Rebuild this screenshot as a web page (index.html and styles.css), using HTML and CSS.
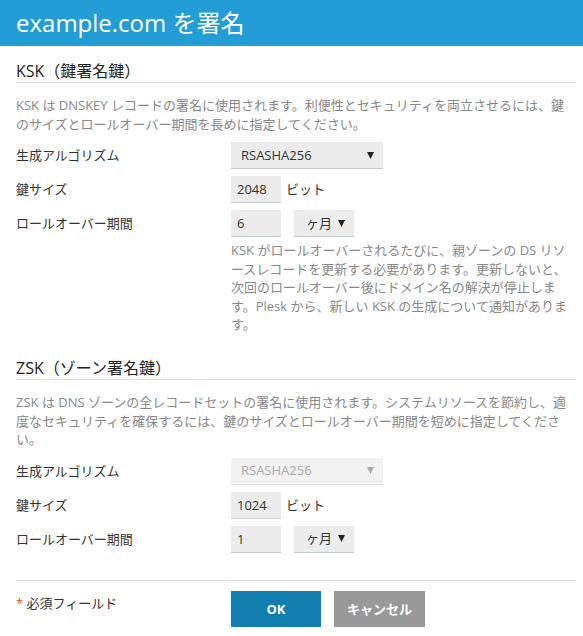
FILE: index.html
```html
<!DOCTYPE html>
<html lang="ja">
<head>
<meta charset="utf-8">
<title>example.com を署名</title>
<link rel="stylesheet" href="styles.css">
</head>
<body>
<header class="title-bar">example.com を署名</header>
<main class="content">
  <section class="group">
    <h2 class="group-title">KSK（鍵署名鍵）</h2>
    <p class="group-desc">KSK は DNSKEY レコードの署名に使用されます。利便性とセキュリティを両立させるには、鍵のサイズとロールオーバー期間を長めに指定してください。</p>
    <div class="form">
      <div class="label">生成アルゴリズム</div>
      <div class="field"><div class="select wide"><span>RSASHA256</span><svg class="arrow" width="7" height="7" viewBox="0 0 7 7"><polygon points="0,0 7,0 3.5,7"/></svg></div></div>
      <div class="label">鍵サイズ</div>
      <div class="field"><input class="text short" value="2048"><span class="unit">ビット</span></div>
      <div class="label">ロールオーバー期間</div>
      <div class="field">
        <div class="inline"><input class="text short" value="6"><div class="select unit-sel"><span>ヶ月</span><svg class="arrow" width="7" height="7" viewBox="0 0 7 7"><polygon points="0,0 7,0 3.5,7"/></svg></div></div>
        <p class="hint">KSK がロールオーバーされるたびに、親ゾーンの DS リソースレコードを更新する必要があります。更新しないと、次回のロールオーバー後にドメイン名の解決が停止します。Plesk から、新しい KSK の生成について通知があります。</p>
      </div>
    </div>
  </section>
  <section class="group">
    <h2 class="group-title">ZSK（ゾーン署名鍵）</h2>
    <p class="group-desc">ZSK は DNS ゾーンの全レコードセットの署名に使用されます。システムリソースを節約し、適度なセキュリティを確保するには、鍵のサイズとロールオーバー期間を短めに指定してください。</p>
    <div class="form">
      <div class="label">生成アルゴリズム</div>
      <div class="field"><div class="select wide disabled"><span>RSASHA256</span><svg class="arrow" width="7" height="7" viewBox="0 0 7 7"><polygon points="0,0 7,0 3.5,7"/></svg></div></div>
      <div class="label">鍵サイズ</div>
      <div class="field"><input class="text short" value="1024"><span class="unit">ビット</span></div>
      <div class="label">ロールオーバー期間</div>
      <div class="field">
        <div class="inline"><input class="text short" value="1"><div class="select unit-sel"><span>ヶ月</span><svg class="arrow" width="7" height="7" viewBox="0 0 7 7"><polygon points="0,0 7,0 3.5,7"/></svg></div></div>
      </div>
    </div>
  </section>
  <footer class="footer">
    <div class="required"><span class="star">*</span> 必須フィールド</div>
    <div class="buttons">
      <button class="btn btn-primary">OK</button>
      <button class="btn btn-secondary">キャンセル</button>
    </div>
  </footer>
</main>
</body>
</html>
```
FILE: styles.css
```css
* { box-sizing: border-box; }
body {
  margin: 0;
  background: #fff;
  font-family: "Open Sans", "Noto Sans CJK JP", sans-serif;
  font-size: 13px;
  line-height: 1.42857;
  color: #333;
}
.title-bar {
  height: 46px;
  background: #239dd5;
  color: #fff;
  font-size: 24px;
  line-height: 46px;
  padding-left: 16px;
}
.content {
  padding: 0 7px 0 16px;
}
.group {
  margin-top: 14px;
  margin-bottom: 23px;
}
.group-title {
  margin: 0;
  font-size: 16px;
  font-weight: 400;
  line-height: 22px;
  color: #222;
  border-bottom: 1px solid #ddd;
}
.group-desc {
  margin: 13px 0 9px;
  color: #888;
}
.form {
  display: grid;
  grid-template-columns: 215px 1fr;
  row-gap: 7px;
}
.label {
  line-height: 27px;
  color: #333;
}
.field {
  display: flex;
  flex-direction: column;
  align-items: flex-start;
}
.field:has(.unit) {
  flex-direction: row;
  align-items: center;
}
.inline {
  display: flex;
  gap: 13px;
}
.select, .text {
  height: 27px;
  background: #ececec;
  border: none;
  border-bottom: 1px solid #c4cbd1;
  font-family: inherit;
  font-size: 13px;
  color: #333;
  padding: 0 10px;
}
.select {
  display: flex;
  align-items: center;
  justify-content: space-between;
}
.select .arrow {
  fill: #222;
  margin-right: -1px;
}
.wide { width: 152px; }
.unit-sel { width: 60px; padding: 0 10px 0 12px; }
.text.short { width: 50px; padding: 0 6px; outline: none; }
.unit { margin-left: 5px; }
.disabled {
  background: #f2f2f2;
  color: #aaa;
  border-bottom-color: #e4e4e4;
}
.disabled .arrow { fill: #aaa; }
.hint {
  margin: 4px 0 0;
  color: #888;
}
.footer {
  margin-top: 27px;
  border-top: 1px solid #ddd;
  display: grid;
  grid-template-columns: 215px 1fr;
  padding-top: 10px;
}
.group + .group { margin-bottom: 0; }
.required {
  padding-top: 3px;
}
.star { color: #e0531f; }
.buttons {
  display: flex;
  gap: 13px;
}
.btn {
  height: 36px;
  border: none;
  font-family: inherit;
  font-size: 13px;
  font-weight: 700;
  color: #fff;
}
.btn-primary { width: 90px; background: #107fb0; }
.btn-secondary { width: 91px; background: #999; }
```
